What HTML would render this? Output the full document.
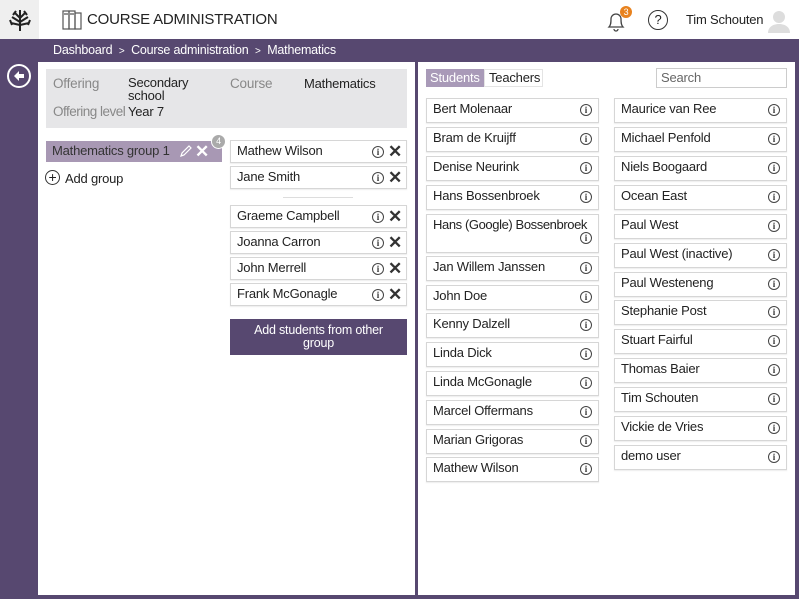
<!DOCTYPE html><html><head><meta charset="utf-8"><style>
*{box-sizing:border-box;margin:0;padding:0}
body{width:799px;height:599px;overflow:hidden;background:#574870;font-family:"Liberation Sans",sans-serif;font-size:13px;color:#222;position:relative;letter-spacing:-0.2px}
.a{position:absolute}
.it{position:absolute;background:#fff;border:1px solid #d6d6d6;box-shadow:0 1px 1px rgba(0,0,0,.08);padding:2px 6px;height:25px;white-space:nowrap;font-size:13px}
.i{position:absolute;width:12px;height:12px;border:1px solid #444;border-radius:50%;font:bold 9px "Liberation Serif",serif;text-align:center;line-height:11px;color:#333;letter-spacing:0}
.x{position:absolute;font:bold 17px "Liberation Sans",sans-serif;color:#333;line-height:14px}
</style></head><body>
<div class="a" style="left:0;top:0;width:799px;height:39px;background:#fff"></div>
<div class="a" style="left:0;top:0;width:39px;height:39px;background:#efefef"></div>
<svg class="a" style="left:7px;top:8px" width="26" height="24" viewBox="0 0 26 24" stroke="#222" stroke-width="2" fill="none"><path d="M13 2v21M13 10l-6-6M13 14l-8-5M13 17l-9-2M13 10l6-6M13 14l8-5M13 17l9-2M9 3l-3 4M17 3l3 4M3 12l2 5M23 12l-2 5"/></svg>
<svg class="a" style="left:62px;top:10px" width="21" height="21" viewBox="0 0 21 21" fill="none" stroke="#555" stroke-width="1.2"><rect x="1" y="1" width="6" height="18"/><rect x="7" y="1" width="6" height="18"/><rect x="13" y="3" width="6" height="16"/><path d="M2 4h4M8 4h4"/></svg>
<div class="a" style="left:87px;top:11px;font-size:15px;color:#222">COURSE ADMINISTRATION</div>
<svg class="a" style="left:604px;top:9px" width="24" height="24" viewBox="0 0 24 24" fill="none" stroke="#444" stroke-width="1.3"><path d="M5 18c2-2 2-5 2-8a5 5 0 0110 0c0 3 0 6 2 8zM10 20a2 2 0 004 0"/></svg>
<div class="a" style="left:620px;top:6px;width:12px;height:12px;border-radius:50%;background:#e8821e;color:#fff;font-size:9px;text-align:center;line-height:12px">3</div>
<div class="a" style="left:648px;top:10px;width:20px;height:20px;border:1.5px solid #333;border-radius:50%;text-align:center;font-size:13px;line-height:17px">?</div>
<div class="a" style="left:686px;top:12px;font-size:13px">Tim Schouten</div>
<svg class="a" style="left:767px;top:9px" width="24" height="24" viewBox="0 0 24 24" fill="#ddd"><circle cx="12" cy="8" r="6"/><path d="M1 24c0-6 5-9 11-9s11 3 11 9z"/></svg>
<div class="a" style="left:53px;top:43px;color:#fff;font-size:12.5px">Dashboard &nbsp;<span style="font-size:10px">&gt;</span>&nbsp; Course administration &nbsp;<span style="font-size:10px">&gt;</span>&nbsp; Mathematics</div>
<div class="a" style="left:7px;top:64px;width:24px;height:24px;border:2px solid #fff;border-radius:50%"></div>
<svg class="a" style="left:11px;top:68px" width="16" height="16" viewBox="0 0 16 16"><path d="M3 8l5-5v3h5v4H8v3z" fill="#fff"/></svg>
<div class="a" style="left:38px;top:62px;width:377px;height:533px;background:#fff"></div>
<div class="a" style="left:418px;top:62px;width:377px;height:533px;background:#fff"></div>
<div class="a" style="left:46px;top:69px;width:361px;height:59px;background:#e6e6e8"></div>
<div class="a" style="left:53px;top:76px;color:#888;font-size:13.5px">Offering</div>
<div class="a" style="left:128px;top:76px;font-size:13px;line-height:13px">Secondary<br>school</div>
<div class="a" style="left:230px;top:76px;color:#888;font-size:13.5px">Course</div>
<div class="a" style="left:304px;top:76px;font-size:13px">Mathematics</div>
<div class="a" style="left:53px;top:104px;color:#888;font-size:13.5px;letter-spacing:-0.5px">Offering level</div>
<div class="a" style="left:128px;top:104px;font-size:13px">Year 7</div>
<div class="a" style="left:46px;top:141px;width:176px;height:21px;background:#a898b4;padding:2px 6px;font-size:13px;color:#333">Mathematics group 1</div>
<svg class="a" style="left:179px;top:145px" width="13" height="13" viewBox="0 0 13 13" fill="none" stroke="#fff" stroke-width="1.2"><path d="M2 11l1-3 7-7 2 2-7 7z"/></svg>
<div class="x" style="left:195px;top:145px;color:#fff">✕</div>
<div class="a" style="left:211px;top:134px;width:15px;height:15px;border-radius:50%;background:#aaa;border:1.5px solid #fff;color:#fff;font-size:9px;text-align:center;line-height:12px">4</div>
<div class="a" style="left:45px;top:170px;width:15px;height:15px;border:1.3px solid #333;border-radius:50%;text-align:center;line-height:12px;font-size:14px">+</div>
<div class="a" style="left:65px;top:171px;font-size:13px">Add group</div>
<div class="it" style="left:230px;top:140px;width:177px;height:23px">Mathew Wilson</div><div class="i" style="left:372px;top:146px">i</div><div class="x" style="left:388px;top:145px">✕</div>
<div class="it" style="left:230px;top:166px;width:177px;height:23px">Jane Smith</div><div class="i" style="left:372px;top:172px">i</div><div class="x" style="left:388px;top:171px">✕</div>
<div class="a" style="left:283px;top:197px;width:70px;height:1px;background:#ddd"></div>
<div class="it" style="left:230px;top:205px;width:177px;height:23px">Graeme Campbell</div><div class="i" style="left:372px;top:211px">i</div><div class="x" style="left:388px;top:210px">✕</div>
<div class="it" style="left:230px;top:231px;width:177px;height:23px">Joanna Carron</div><div class="i" style="left:372px;top:237px">i</div><div class="x" style="left:388px;top:236px">✕</div>
<div class="it" style="left:230px;top:257px;width:177px;height:23px">John Merrell</div><div class="i" style="left:372px;top:263px">i</div><div class="x" style="left:388px;top:262px">✕</div>
<div class="it" style="left:230px;top:283px;width:177px;height:23px">Frank McGonagle</div><div class="i" style="left:372px;top:289px">i</div><div class="x" style="left:388px;top:288px">✕</div>
<div class="a" style="left:230px;top:319px;width:177px;height:36px;background:#574870;color:#fff;font-size:12.5px;text-align:center;line-height:13px;padding-top:5px">Add students from other<br>group</div>
<div class="a" style="left:426px;top:69px;width:58px;height:18px;background:#a99ab8;color:#fff;font-size:13px;padding:1px 4px">Students</div>
<div class="a" style="left:484px;top:69px;width:59px;height:18px;border:1px solid #e4e4e4;font-size:13px;padding:0 4px">Teachers</div>
<div class="a" style="left:656px;top:68px;width:131px;height:20px;border:1px solid #ccc;color:#666;font-size:13px;padding:1px 4px">Search</div>
<div class="it" style="left:426px;top:98px;width:173px">Bert Molenaar</div><div class="i" style="left:580px;top:104px">i</div>
<div class="it" style="left:426px;top:127px;width:173px">Bram de Kruijff</div><div class="i" style="left:580px;top:133px">i</div>
<div class="it" style="left:426px;top:156px;width:173px">Denise Neurink</div><div class="i" style="left:580px;top:162px">i</div>
<div class="it" style="left:426px;top:185px;width:173px">Hans Bossenbroek</div><div class="i" style="left:580px;top:191px">i</div>
<div class="it" style="left:426px;top:214px;width:173px;height:39px;letter-spacing:-0.4px">Hans (Google) Bossenbroek</div><div class="i" style="left:580px;top:232px">i</div>
<div class="it" style="left:426px;top:256px;width:173px">Jan Willem Janssen</div><div class="i" style="left:580px;top:262px">i</div>
<div class="it" style="left:426px;top:285px;width:173px">John Doe</div><div class="i" style="left:580px;top:291px">i</div>
<div class="it" style="left:426px;top:313px;width:173px">Kenny Dalzell</div><div class="i" style="left:580px;top:319px">i</div>
<div class="it" style="left:426px;top:342px;width:173px">Linda Dick</div><div class="i" style="left:580px;top:348px">i</div>
<div class="it" style="left:426px;top:371px;width:173px">Linda McGonagle</div><div class="i" style="left:580px;top:377px">i</div>
<div class="it" style="left:426px;top:400px;width:173px">Marcel Offermans</div><div class="i" style="left:580px;top:406px">i</div>
<div class="it" style="left:426px;top:429px;width:173px">Marian Grigoras</div><div class="i" style="left:580px;top:435px">i</div>
<div class="it" style="left:426px;top:457px;width:173px">Mathew Wilson</div><div class="i" style="left:580px;top:463px">i</div>
<div class="it" style="left:614px;top:98px;width:173px">Maurice van Ree</div><div class="i" style="left:768px;top:104px">i</div>
<div class="it" style="left:614px;top:127px;width:173px">Michael Penfold</div><div class="i" style="left:768px;top:133px">i</div>
<div class="it" style="left:614px;top:156px;width:173px">Niels Boogaard</div><div class="i" style="left:768px;top:162px">i</div>
<div class="it" style="left:614px;top:185px;width:173px">Ocean East</div><div class="i" style="left:768px;top:191px">i</div>
<div class="it" style="left:614px;top:214px;width:173px">Paul West</div><div class="i" style="left:768px;top:220px">i</div>
<div class="it" style="left:614px;top:243px;width:173px">Paul West (inactive)</div><div class="i" style="left:768px;top:249px">i</div>
<div class="it" style="left:614px;top:272px;width:173px">Paul Westeneng</div><div class="i" style="left:768px;top:278px">i</div>
<div class="it" style="left:614px;top:300px;width:173px">Stephanie Post</div><div class="i" style="left:768px;top:306px">i</div>
<div class="it" style="left:614px;top:329px;width:173px">Stuart Fairful</div><div class="i" style="left:768px;top:335px">i</div>
<div class="it" style="left:614px;top:358px;width:173px">Thomas Baier</div><div class="i" style="left:768px;top:364px">i</div>
<div class="it" style="left:614px;top:387px;width:173px">Tim Schouten</div><div class="i" style="left:768px;top:393px">i</div>
<div class="it" style="left:614px;top:416px;width:173px">Vickie de Vries</div><div class="i" style="left:768px;top:422px">i</div>
<div class="it" style="left:614px;top:445px;width:173px">demo user</div><div class="i" style="left:768px;top:451px">i</div>
</body></html>
